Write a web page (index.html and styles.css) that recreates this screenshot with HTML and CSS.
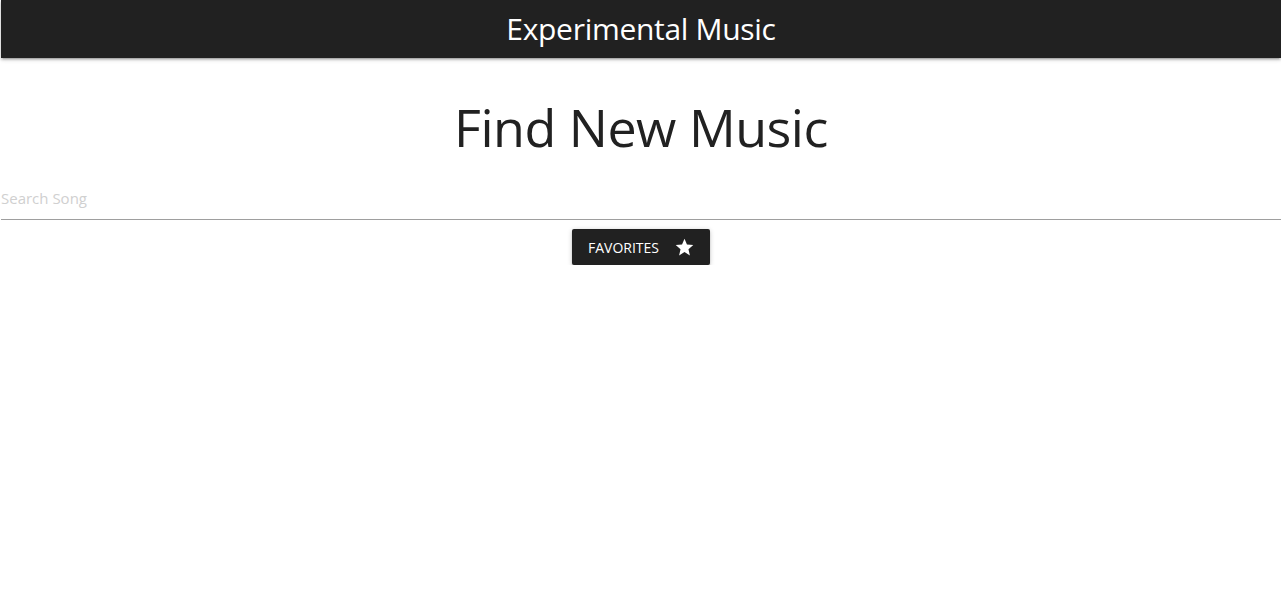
FILE: index.html
```html
<!DOCTYPE html>
<html lang="en">
<head>
<meta charset="utf-8">
<title>Experimental Music</title>
<link rel="stylesheet" href="styles.css">
</head>
<body>
<div class="page">
  <nav class="navbar">
    <span class="brand">Experimental Music</span>
  </nav>
  <main class="content">
    <h1 class="title">Find New Music</h1>
    <div class="search">
      <input class="search-input" type="text" placeholder="Search Song">
    </div>
    <div class="actions">
      <button class="btn" type="button">
        <span>Favorites</span>
        <svg class="star" viewBox="0 0 24 24" width="21" height="21" aria-hidden="true"><path d="M12 17.27L18.18 21l-1.64-7.03L22 9.24l-7.19-.61L12 2 9.19 8.63 2 9.24l5.46 4.73L5.82 21z" fill="#fff"/></svg>
      </button>
    </div>
  </main>
</div>
</body>
</html>
```
FILE: styles.css
```css
html, body {
  margin: 0;
  padding: 0;
  background: #fff;
}
body {
  font-family: "Open Sans", "Noto Sans", sans-serif;
  color: #222;
}
.page {
  padding-left: 1px;
}
.navbar {
  height: 58px;
  background: #212121;
  display: flex;
  align-items: center;
  justify-content: center;
  box-shadow: 0 2px 2px 0 rgba(0,0,0,0.14), 0 3px 1px -2px rgba(0,0,0,0.12), 0 1px 5px 0 rgba(0,0,0,0.2);
}
.brand {
  color: #fff;
  font-size: 30px;
  line-height: 1;
  margin-top: -1px;
  letter-spacing: -0.3px;
}
.content {
  display: flex;
  flex-direction: column;
}
.title {
  margin: 37px 0 0;
  text-align: center;
  font-weight: 400;
  font-size: 52px;
  line-height: 64px;
  color: #212121;
  letter-spacing: -0.5px;
}
.search {
  margin-top: 18px;
}
.search-input {
  display: block;
  width: 100%;
  box-sizing: border-box;
  border: none;
  border-bottom: 1px solid #9e9e9e;
  outline: none;
  padding: 0;
  height: 43px;
  font-family: inherit;
  font-size: 15px;
  color: #333;
  background: transparent;
}
.search-input::placeholder {
  color: #d0d0d0;
}
.actions {
  display: flex;
  justify-content: center;
  margin-top: 9px;
}
.btn {
  display: flex;
  align-items: center;
  gap: 15px;
  height: 36px;
  padding: 0 15px 0 16px;
  border: none;
  border-radius: 2px;
  background: #212121;
  color: #fff;
  font-family: inherit;
  font-size: 14px;
  text-transform: uppercase;
  letter-spacing: 0;
  box-shadow: 0 2px 2px 0 rgba(0,0,0,0.14), 0 3px 1px -2px rgba(0,0,0,0.12), 0 1px 5px 0 rgba(0,0,0,0.2);
  cursor: pointer;
}
.star {
  display: block;
}
```
